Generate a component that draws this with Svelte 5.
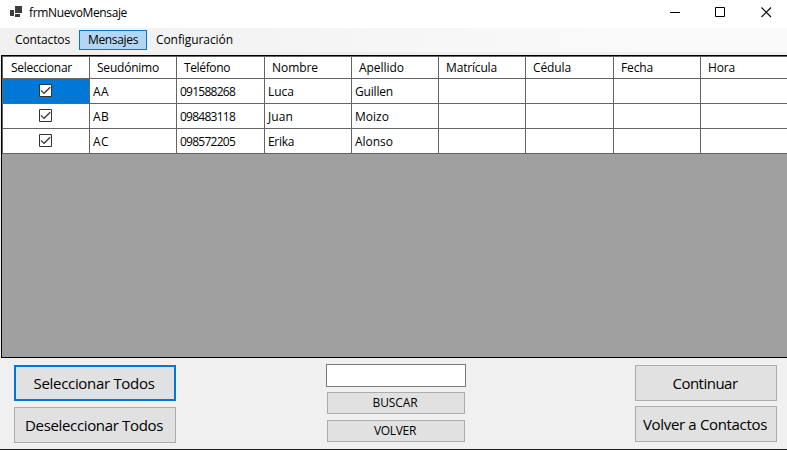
<script>
  const menu = [
    { label: 'Contactos', w: 55, box: 71 },
    { label: 'Mensajes', w: 50, box: 68, active: true },
    { label: 'Configuración', w: 77, box: 95 }
  ];
  const columns = [
    { label: 'Seleccionar', w: 61, box: 87 },
    { label: 'Seudónimo', w: 62, box: 87 },
    { label: 'Teléfono', w: 46, box: 88 },
    { label: 'Nombre', w: 46, box: 87 },
    { label: 'Apellido', w: 45, box: 87 },
    { label: 'Matrícula', w: 51, box: 87 },
    { label: 'Cédula', w: 38, box: 88 },
    { label: 'Fecha', w: 32, box: 87 },
    { label: 'Hora', w: 27, box: 88 }
  ];
  const rows = [
    [['AA', 16], ['091588268', 55], ['Luca', 26], ['Guillen', 38]],
    [['AB', 16], ['098483118', 55], ['Juan', 25], ['Moizo', 34]],
    [['AC', 16], ['098572205', 55], ['Erika', 26], ['Alonso', 38]]
  ].map((cells) => [...cells, null, null, null, null]);

  // Spaces the letters so that a label takes up its given width.
  function fit(node, width) {
    const natural = node.getBoundingClientRect().width;
    node.style.letterSpacing = `${(width - natural) / node.textContent.length}px`;
  }
</script>

<div class="window">
  <header class="titlebar">
    <svg class="logo" width="13" height="12" viewBox="0 0 13 12" shape-rendering="crispEdges">
      <path fill="#3c3c3c" d="M5 0h7v7H5zM0 4h4v6H0zM5 8h5v3H5z" />
    </svg>
    <span class="title" use:fit={98}>frmNuevoMensaje</span>
    <div class="controls">
      <svg width="11" height="11" viewBox="0 0 11 11"><path d="M0 5.5h10" stroke="#000" /></svg>
      <svg width="11" height="11" viewBox="0 0 11 11"><path d="M.5.5h9v9h-9z" fill="none" stroke="#000" /></svg>
      <svg class="close" width="11" height="11" viewBox="0 0 11 11"><path d="M.5.5l9.5 9.5M10 .5L.5 10" stroke="#000" stroke-width="1.1" /></svg>
    </div>
  </header>

  <nav>
    {#each menu as item}
      <div class="item" class:active={item.active} style:width="{item.box}px">
        <span use:fit={item.w}>{item.label}</span>
      </div>
    {/each}
  </nav>

  <main>
    <div class="row head">
      {#each columns as col}
        <div class="cell" style:width="{col.box}px"><span use:fit={col.w}>{col.label}</span></div>
      {/each}
    </div>
    {#each rows as row, i}
      <div class="row">
        <div class="cell check" class:selected={i === 0} style:width="{columns[0].box}px">
          <svg width="13" height="13" viewBox="0 0 13 13">
            <path d="M.5.5h12v12H.5z" fill="#fff" stroke="#333" />
            <path d="M2 6.3l3 3L11.2 3.2" fill="none" stroke="#333" stroke-width="1.2" />
          </svg>
        </div>
        {#each row as cell, j}
          <div class="cell" style:width="{columns[j + 1].box}px">
            {#if cell}<span use:fit={cell[1]}>{cell[0]}</span>{/if}
          </div>
        {/each}
      </div>
    {/each}
  </main>

  <footer>
    <div class="group left">
      <button class="large focused"><span use:fit={121}>Seleccionar Todos</span></button>
      <button class="large"><span use:fit={138}>Deseleccionar Todos</span></button>
    </div>
    <div class="group middle">
      <input type="text" aria-label="Buscar" />
      <button><span use:fit={45}>BUSCAR</span></button>
      <button><span use:fit={42}>VOLVER</span></button>
    </div>
    <div class="group right">
      <button class="large"><span use:fit={65}>Continuar</span></button>
      <button class="large"><span use:fit={124}>Volver a Contactos</span></button>
    </div>
  </footer>
</div>

<style>
  .window {
    box-sizing: border-box;
    width: 787px;
    height: 450px;
    overflow: hidden;
    display: flex;
    flex-direction: column;
    background: #f0f0f0;
    border-bottom: 1px solid #1c1c1c;
    color: #000;
    font: 12px/16px 'Open Sans', 'Noto Sans', sans-serif;
  }
  span {
    white-space: pre;
    flex: none;
  }
  svg {
    display: block;
    flex: none;
  }
  .titlebar {
    height: 28px;
    flex: none;
    display: flex;
    background: #fff;
  }
  .logo {
    margin: 6px 6px 0 10px;
  }
  .title {
    margin-top: 5px;
  }
  .controls {
    display: flex;
    gap: 34px;
    margin: 7px 15px 0 auto;
  }
  .close {
    margin-left: 1px;
  }
  nav {
    box-sizing: border-box;
    height: 24px;
    flex: none;
    display: flex;
    padding: 2px 0 2px 7px;
    background: linear-gradient(90deg, #f0f0f0, #fafafa 80%);
  }
  .item {
    box-sizing: border-box;
    height: 20px;
    display: flex;
    align-items: center;
    justify-content: center;
    border: 1px solid transparent;
  }
  .item:first-child {
    margin-right: 1px;
  }
  .item.active {
    background: #b3d7f3;
    border-color: #0078d7;
  }
  main {
    box-sizing: border-box;
    height: 303px;
    width: 800px;
    flex: none;
    margin: 3px 0 0 1px;
    border: 1px solid #000;
    background: #a0a0a0;
    overflow: hidden;
  }
  .row {
    display: flex;
    height: 25px;
    box-sizing: border-box;
    border-left: 1px solid #646464;
  }
  .head {
    height: 23px;
    border-top: 1px solid #646464;
  }
  .cell {
    box-sizing: border-box;
    flex: none;
    display: flex;
    align-items: center;
    padding: 2px 0 0 3px;
    background: #fff;
    border-right: 1px solid #646464;
    border-bottom: 1px solid #646464;
  }
  .head .cell {
    padding: 0 0 0 7px;
  }
  .head .cell:first-child {
    padding-left: 8px;
  }
  .cell.check {
    align-items: flex-start;
    padding: 5px 0 0 36px;
  }
  .cell.selected {
    background: #0078d7;
  }
  footer {
    display: flex;
    align-items: flex-start;
    padding: 6px 10px 0 14px;
  }
  .group {
    display: flex;
    flex-direction: column;
  }
  .left {
    width: 162px;
    gap: 6px;
    margin-top: 1px;
  }
  .middle {
    width: 140px;
    margin-left: 150px;
    align-items: center;
    gap: 6px;
  }
  .right {
    width: 142px;
    gap: 5px;
    margin: 1px 0 0 auto;
  }
  input {
    box-sizing: border-box;
    width: 140px;
    height: 23px;
    margin: 0 0 -1px;
    border: 1px solid #7a7a7a;
    background: #fff;
    font: inherit;
  }
  button {
    box-sizing: border-box;
    width: 138px;
    height: 22px;
    margin: 0;
    padding: 0 2px 0 0;
    display: flex;
    align-items: center;
    justify-content: center;
    border: 1px solid #adadad;
    border-radius: 0;
    background: #e1e1e1;
    color: #000;
    font: inherit;
  }
  .large {
    width: 100%;
    height: 36px;
    font-size: 15px;
    line-height: 20px;
  }
  .focused {
    border: 2px solid #0078d7;
  }
</style>
